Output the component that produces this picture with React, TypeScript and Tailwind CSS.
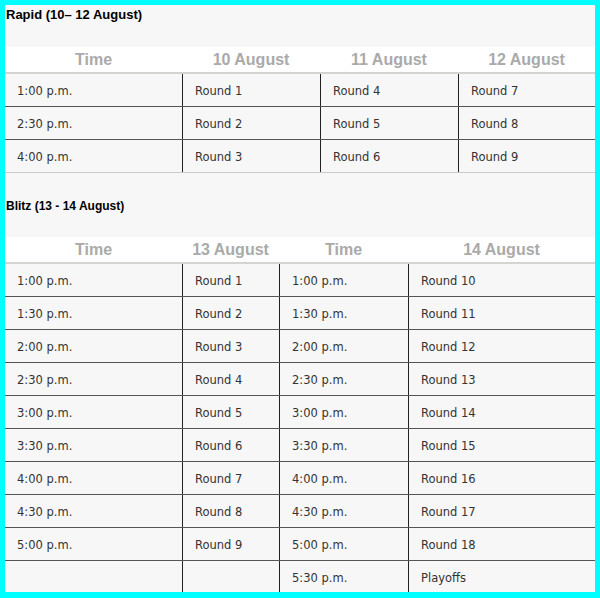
import React from "react";

const rapidRows = [
  ["1:00 p.m.", "Round 1", "Round 4", "Round 7"],
  ["2:30 p.m.", "Round 2", "Round 5", "Round 8"],
  ["4:00 p.m.", "Round 3", "Round 6", "Round 9"],
];

const blitzRows = [
  ["1:00 p.m.", "Round 1", "1:00 p.m.", "Round 10"],
  ["1:30 p.m.", "Round 2", "1:30 p.m.", "Round 11"],
  ["2:00 p.m.", "Round 3", "2:00 p.m.", "Round 12"],
  ["2:30 p.m.", "Round 4", "2:30 p.m.", "Round 13"],
  ["3:00 p.m.", "Round 5", "3:00 p.m.", "Round 14"],
  ["3:30 p.m.", "Round 6", "3:30 p.m.", "Round 15"],
  ["4:00 p.m.", "Round 7", "4:00 p.m.", "Round 16"],
  ["4:30 p.m.", "Round 8", "4:30 p.m.", "Round 17"],
  ["5:00 p.m.", "Round 9", "5:00 p.m.", "Round 18"],
  ["", "", "5:30 p.m.", "Playoffs"],
];

function Schedule({
  headers,
  cols,
  rows,
  lastBorder,
}: {
  headers: string[];
  cols: string;
  rows: string[][];
  lastBorder: string;
}) {
  return (
    <div>
      <div className={`grid ${cols} h-[27px] bg-white border-b-2 border-[#d4d4d0]`}>
        {headers.map((h, i) => (
          <div
            key={i}
            className="flex items-center justify-center text-[16px] font-bold text-[#aaaaaa] font-['Liberation_Sans',sans-serif]"
          >
            {h}
          </div>
        ))}
      </div>
      {rows.map((r, i) => (
        <div
          key={i}
          className={`grid ${cols} h-[33px] border-b ${
            i === rows.length - 1 ? lastBorder : "border-[#555555]"
          }`}
        >
          {r.map((c, j) => (
            <div
              key={j}
              className={`flex items-center px-3 pt-1 text-[11.5px] text-[#333333] font-['DejaVu_Sans',sans-serif] ${
                j > 0 ? "border-l border-[#222222]" : ""
              }`}
            >
              {c}
            </div>
          ))}
        </div>
      ))}
    </div>
  );
}

export default function App() {
  return (
    <div className="h-[598px] w-[600px] overflow-hidden bg-[#00ffff] pt-[5px] pl-[5px] pr-[5px]">
      <div className="h-[587px] overflow-hidden bg-[#f7f7f7]">
        <div className="h-[42px] pt-[2px] pl-[1px] text-[13px] font-bold leading-4 text-black font-['Liberation_Sans',sans-serif]">
          Rapid (10– 12 August)
        </div>
        <Schedule
          headers={["Time", "10 August", "11 August", "12 August"]}
          cols="grid-cols-[177px_138px_138px_137px]"
          rows={rapidRows}
          lastBorder="border-[#cccccc]"
        />
        <div className="h-[64px] pt-[25px] pl-[1px] text-[12px] font-bold leading-4 text-black font-['Liberation_Sans',sans-serif]">
          Blitz (13 - 14 August)
        </div>
        <Schedule
          headers={["Time", "13 August", "Time", "14 August"]}
          cols="grid-cols-[177px_97px_129px_187px]"
          rows={blitzRows}
          lastBorder="border-transparent"
        />
      </div>
    </div>
  );
}
